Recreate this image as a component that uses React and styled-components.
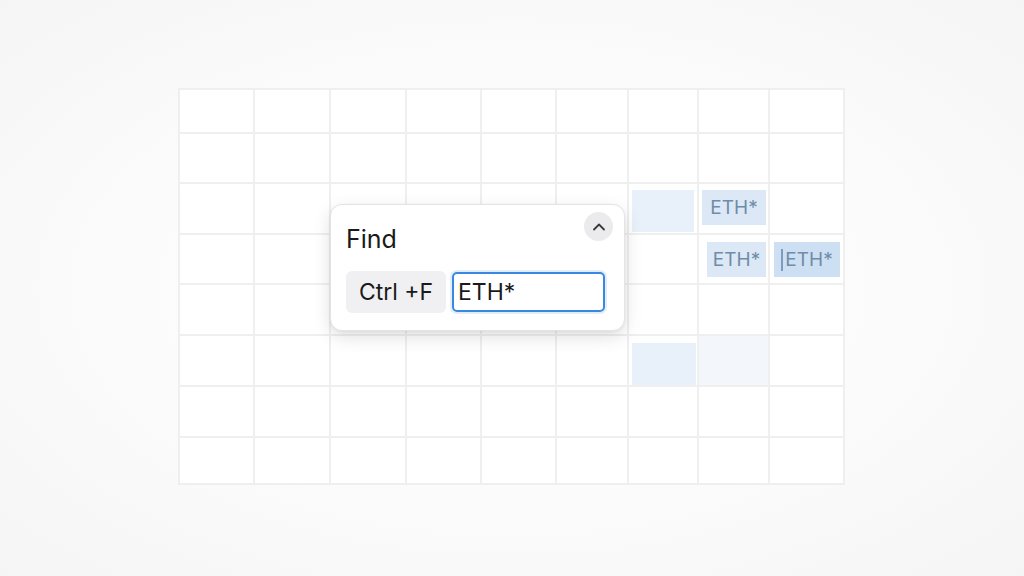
import React from 'react';
import styled, { createGlobalStyle } from 'styled-components';

const GlobalStyle = createGlobalStyle`
  html, body {
    margin: 0;
    padding: 0;
    background: #f8f8f8;
    font-family: Inter, "Noto Sans", "Liberation Sans", sans-serif;
  }
`;

const COLS = [75, 76, 76, 75, 75, 72, 70, 71, 75];
const ROWS = [44, 50, 51, 50, 51, 51, 51, 47];

// highlighted cells, keyed "row-col"
const HITS = {
  '2-6': { tone: 'soft', pad: '6px 3px 1px 3px' },
  '2-7': { tone: 'mid', pad: '6px 2px 8px 3px', text: 'ETH*' },
  '3-7': { tone: 'mid', pad: '7px 2px 6px 8px', text: 'ETH*' },
  '3-8': { tone: 'strong', pad: '7px 3px 6px 4px', text: 'ETH*', caret: true },
  '5-6': { tone: 'soft', pad: '7px 1px 0 3px' },
  '5-7': { tone: 'faint', pad: '0' },
};

const TONES = {
  faint: '#f3f6fb',
  soft: '#e8f0fa',
  mid: '#dce8f6',
  strong: '#cddff3',
};

const Page = styled.div`
  width: 1024px;
  height: 576px;
  background: radial-gradient(ellipse at center, #ffffff 0%, #fbfbfb 55%, #f5f5f5 100%);
  padding: 88px 0 0 178px;
  box-sizing: border-box;
`;

const Sheet = styled.div`
  position: relative;
  display: inline-grid;
  grid-template-columns: ${COLS.map((c) => `${c}px`).join(' ')};
  grid-template-rows: ${ROWS.map((r) => `${r}px`).join(' ')};
  background: #ffffff;
  border-top: 2px solid #efefef;
  border-left: 2px solid #efefef;
`;

const Cell = styled.div`
  box-sizing: border-box;
  border-right: 2px solid #efefef;
  border-bottom: 2px solid #efefef;
  padding: ${(p) => p.$pad || '0'};
  display: flex;
`;

const Mark = styled.div`
  flex: 1;
  background: ${(p) => TONES[p.$tone]};
  display: flex;
  align-items: center;
  justify-content: center;
  color: #6f8ca8;
  font-size: 19px;
`;

const Caret = styled.span`
  display: inline-block;
  width: 2px;
  height: 22px;
  background: #7d9cbb;
  margin-right: 2px;
`;

const Dialog = styled.div`
  position: absolute;
  left: 150px;
  top: 114px;
  width: 295px;
  height: 127px;
  box-sizing: border-box;
  background: #ffffff;
  border: 1px solid #e4e4e6;
  border-radius: 12px;
  box-shadow: 0 6px 18px rgba(0, 0, 0, 0.12), 0 1px 3px rgba(0, 0, 0, 0.06);
  padding: 17px 19px 0 15px;
  display: flex;
  flex-direction: column;
`;

const Header = styled.div`
  display: flex;
  justify-content: space-between;
  align-items: flex-start;
  height: 49px;
`;

const Title = styled.div`
  font-size: 25px;
  color: #1a1a1a;
  padding-top: 2px;
`;

const Collapse = styled.button`
  width: 29px;
  height: 29px;
  margin-top: -10px;
  margin-right: -8px;
  border: none;
  border-radius: 50%;
  background: #ebebee;
  display: flex;
  align-items: center;
  justify-content: center;
  padding: 0;
`;

const Row = styled.div`
  display: flex;
  gap: 6px;
  align-items: center;
`;

const Key = styled.div`
  width: 100px;
  height: 42px;
  border-radius: 6px;
  background: #f0f0f2;
  display: flex;
  align-items: center;
  justify-content: center;
  font-size: 23px;
  color: #1a1a1a;
`;

const Input = styled.div`
  width: 153px;
  height: 40px;
  box-sizing: border-box;
  border: 2px solid #3a88df;
  border-radius: 5px;
  box-shadow: 0 0 0 2px rgba(58, 136, 223, 0.15);
  display: flex;
  align-items: center;
  padding-left: 4px;
  font-size: 23px;
  color: #1a1a1a;
`;

export default function App() {
  const cells = [];
  ROWS.forEach((_, r) => {
    COLS.forEach((_, c) => {
      const hit = HITS[`${r}-${c}`];
      cells.push(
        <Cell key={`${r}-${c}`} $pad={hit ? hit.pad : undefined}>
          {hit && (
            <Mark $tone={hit.tone}>
              {hit.caret && <Caret />}
              {hit.text}
            </Mark>
          )}
        </Cell>
      );
    });
  });

  return (
    <Page>
      <GlobalStyle />
      <Sheet>
        {cells}
        <Dialog>
          <Header>
            <Title>Find</Title>
            <Collapse aria-label="Collapse">
              <svg width="16" height="14" viewBox="0 0 16 14" fill="none">
                <path d="M3 9.5L8 4.5l5 5" stroke="#3a3a3a" strokeWidth="1.8" strokeLinecap="round" strokeLinejoin="round" />
              </svg>
            </Collapse>
          </Header>
          <Row>
            <Key>Ctrl +F</Key>
            <Input>ETH*</Input>
          </Row>
        </Dialog>
      </Sheet>
    </Page>
  );
}
